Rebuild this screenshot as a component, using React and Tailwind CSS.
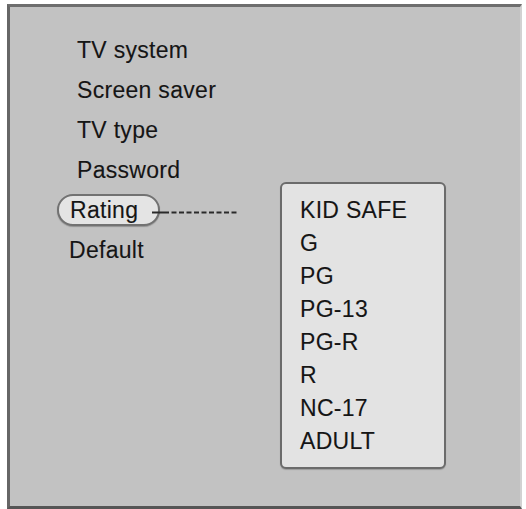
export default function App() {
  const items = ["TV system", "Screen saver", "TV type", "Password"];
  const ratings = ["KID SAFE", "G", "PG", "PG-13", "PG-R", "R", "NC-17", "ADULT"];
  return (
    <div className="w-[526px] h-[509px] bg-white overflow-hidden">
      <div
        className="ml-[7px] mt-[4px] w-[515px] h-[505px] bg-[#c2c2c2] border-l-[3px] border-t-[3px] border-b-[3px] border-r-[2px] border-l-[#666666] border-t-[#6e6e6e] border-b-[#555555] border-r-[#d2d2d2] flex items-start text-[23px] tracking-[0.3px] text-[#151515] [-webkit-text-stroke:0.1px_#151515]"
        style={{ fontFamily: '"Liberation Sans", Arial, sans-serif' }}
      >
        <div className="w-[270px] pt-[23px] flex flex-col">
          {items.map((t) => (
            <div key={t} className="h-[40px] leading-[40px] pl-[67px] whitespace-nowrap">
              {t}
            </div>
          ))}
          <div className="h-[40px] flex items-start pl-[47px]">
            <div className="mt-[4px] h-[32px] w-[103px] rounded-full border-2 border-[#727272] bg-[#e4e4e4] shadow-[0_1px_1px_rgba(0,0,0,0.25)] flex items-center pl-[11px] leading-none">
              Rating
            </div>
            <svg className="mt-[21px] -ml-[8px]" width="86" height="3" viewBox="0 0 86 3">
              <line x1="0" y1="1.5" x2="12" y2="1.5" stroke="#2a2a2a" strokeWidth="2" />
              <line x1="12" y1="1.5" x2="86" y2="1.5" stroke="#2a2a2a" strokeWidth="2" strokeDasharray="5 2.5" />
            </svg>
          </div>
          <div className="h-[40px] leading-[40px] pl-[59px]">Default</div>
        </div>
        <div className="mt-[175px] w-[166px] h-[287px] border-2 border-[#6b6b6b] rounded-[6px] bg-[#e3e3e3] shadow-[0_1px_1px_rgba(0,0,0,0.2)] pl-[18px] pt-[10px] flex flex-col">
          {ratings.map((r) => (
            <div key={r} className="h-[33px] leading-[33px] whitespace-nowrap">
              {r}
            </div>
          ))}
        </div>
      </div>
    </div>
  );
}
